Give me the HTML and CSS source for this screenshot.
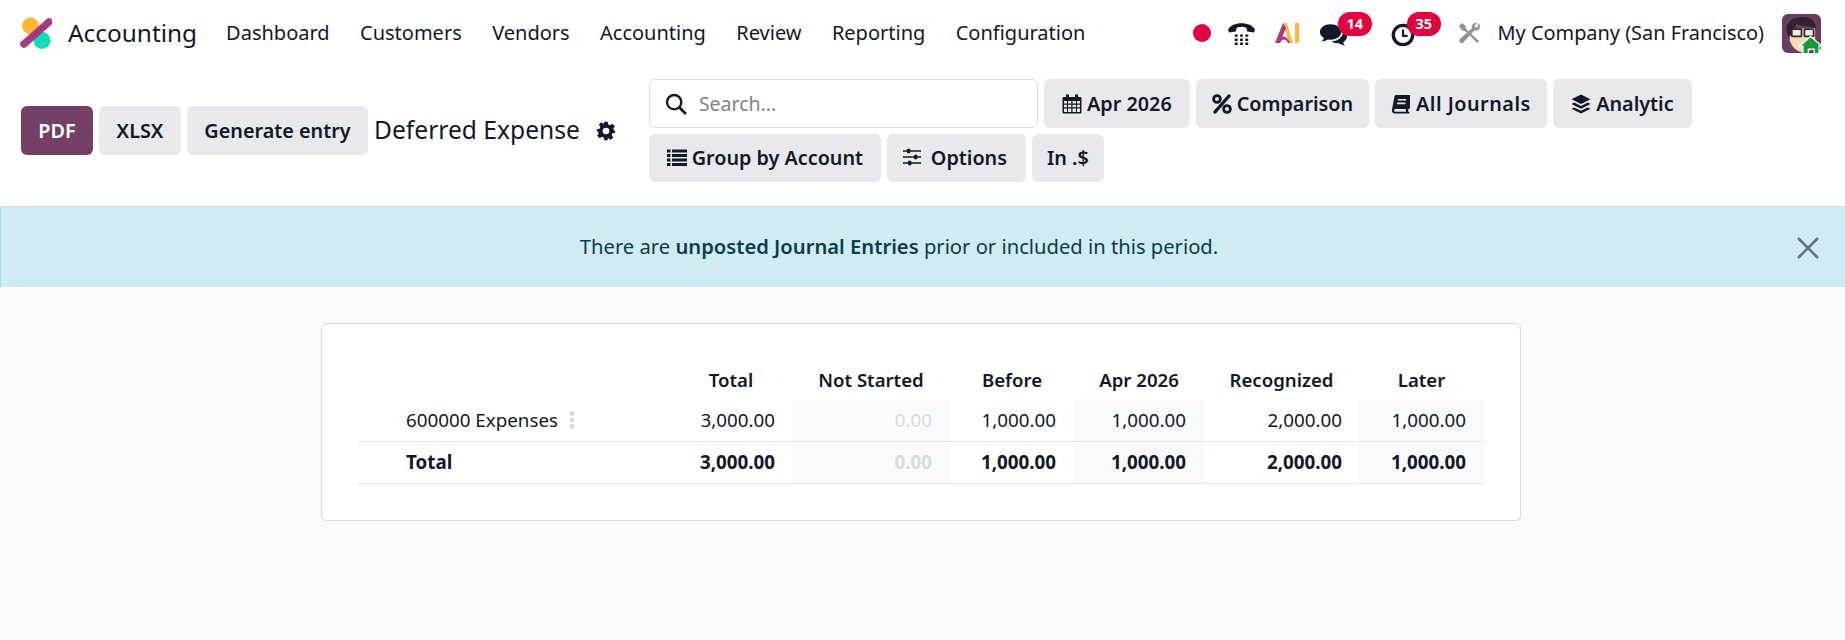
FILE: index.html
```html
<!DOCTYPE html>
<html lang="en">
<head>
    <meta charset="UTF-8">
    <title>Deferred Expense - Accounting</title>
    <link rel="stylesheet" href="styles.css">
</head>
<body>

    <header class="navbar">
        <svg class="app-logo" viewBox="0 0 32 36">
            <circle cx="10.5" cy="11" r="8.5" fill="#fbb735"/>
            <circle cx="22" cy="25.5" r="8.5" fill="#0fdcbc"/>
            <path d="M4 29 L29 7" stroke="#a93b85" stroke-width="7.5" stroke-linecap="round"/>
            <path d="M9 24.6 L25 10.5" stroke="#6e2a5f" stroke-width="1.4" stroke-dasharray="1.4 2.2"/>
        </svg>
        <span class="app-name">Accounting</span>
        <nav class="menu">
            <a>Dashboard</a>
            <a>Customers</a>
            <a>Vendors</a>
            <a>Accounting</a>
            <a>Review</a>
            <a>Reporting</a>
            <a>Configuration</a>
        </nav>
        <div class="systray">
            <span class="rec-dot"></span>
            <svg class="tray-phone" viewBox="0 0 30 26">
                <path d="M1 9 C5 0 25 0 29 9 L28 12 L21 11 L20 7 C17 5.5 13 5.5 10 7 L9 11 L2 12 Z" fill="#111827"/>
                <path d="M8 14 h3v2.5h-3z M13.5 14 h3v2.5h-3z M19 14 h3v2.5h-3z M8 18.2 h3v2.5h-3z M13.5 18.2 h3v2.5h-3z M19 18.2 h3v2.5h-3z M8 22.4 h3v2.5h-3z M13.5 22.4 h3v2.5h-3z M19 22.4 h3v2.5h-3z" fill="#111827"/>
            </svg>
            <svg class="tray-ai" viewBox="0 0 26 22">
                <path d="M9 1 L13 1 L19 21 L15 21 Z" fill="#fbbc3c"/>
                <path d="M9 1 L12 6 L6 21 L1 21 Z" fill="#a93b85"/>
                <path d="M2 21 C4 14 12 11 16 21 L14 21 C11 16 8 17 6 21 Z" fill="#a93b85"/>
                <rect x="21" y="1" width="4" height="20" fill="#fbbc3c"/>
            </svg>
            <span class="tray-badged tray-chat">
                <svg class="tray-chat-icon" viewBox="0 0 30 26">
                    <path d="M12 2 C5.5 2 1 5.6 1 10 C1 12.6 2.6 14.8 5 16.2 C4.6 17.6 3.8 18.8 2.8 19.8 C5.4 19.4 7.6 18.6 9.2 17.6 C10.1 17.8 11 17.9 12 17.9 C18.5 17.9 23 14.4 23 10 C23 5.6 18.5 2 12 2 Z" fill="#111827"/>
                    <path d="M25 9 C25 14.5 20 19 13 19.6 C15 21 17.5 21.6 20 21.4 C21.6 22.6 24 23.6 27 24 C26 23 25.4 21.8 25 20.4 C27.6 19 29 16.8 29 14.4 C29 12.4 27.4 10.4 25 9 Z" fill="#111827"/>
                </svg>
                <span class="badge">14</span>
            </span>
            <span class="tray-badged tray-clock">
                <svg class="tray-clock-icon" viewBox="0 0 26 26">
                    <circle cx="13" cy="13" r="10.5" fill="none" stroke="#111827" stroke-width="3.6"/>
                    <path d="M13 7 V14 H18" fill="none" stroke="#111827" stroke-width="2.4"/>
                </svg>
                <span class="badge">35</span>
            </span>
            <svg class="tray-tools" viewBox="0 0 24 24">
                <path d="M3 1 L7 4 L8 8 L22 21 L20 23 L7 10 L3 9 L0 4 Z" fill="#8f9299"/>
                <path d="M21 1 C23 3 23.5 6 22 8 C20.5 9.5 18.5 9.5 17 9 L5 22 C4 23.2 2 23 1 22 C0 21 0 19.5 1.2 18.4 L14 7 C13.6 5 14 3 15.5 1.8 C17 0.8 18.5 0.6 19.5 1 L17 4 L18 6 L20 6 Z" fill="#8f9299"/>
            </svg>
            <span class="company">My Company (San Francisco)</span>
            <svg class="avatar" viewBox="0 0 40 40">
                <rect width="40" height="40" rx="6" fill="#6d3a60"/>
                <path d="M8 16 L8 27 C10 35 17 40 24 40 L34 34 L34 14 Z" fill="#f6dab4"/>
                <path d="M5 19 C3 10 8 4 18 3.5 C27 2 35 6 35 15 L32 14 C26 12 20 13 15 10 C14 13 12 15 11 21 L7 23 Z" fill="#2c2430"/>
                <rect x="10" y="15.5" width="10" height="7.5" rx="1" fill="#ece9df" stroke="#2c2c30" stroke-width="1.8"/>
                <rect x="23" y="15.5" width="9.5" height="7.5" rx="1" fill="#ece9df" stroke="#2c2c30" stroke-width="1.8"/>
                <path d="M29.5 23 L41 33 L38 33 L38 41 L33 41 L33 36 L27 36 L27 41 L21.5 41 L21.5 33 L18 33 Z" fill="#0f9a3c" stroke="#fff" stroke-width="1.3"/>
            </svg>
        </div>
    </header>

    <section class="control-panel">
        <div class="action-buttons">
            <button class="btn btn-primary btn-pdf">PDF</button>
            <button class="btn btn-xlsx">XLSX</button>
            <button class="btn btn-generate">Generate entry</button>
        </div>
        <span class="report-title">Deferred Expense</span>
        <svg class="title-gear" viewBox="0 0 24 24">
            <path fill-rule="evenodd" d="M10 1 H14 L14.7 4.3 L16.9 5.2 L19.7 3.4 L22.6 6.3 L20.8 9.1 L21.7 11.3 L23 12 V14 L19.7 14.7 L18.8 16.9 L20.6 19.7 L17.7 22.6 L14.9 20.8 L14 21.2 L14 23 H10 L9.3 19.7 L7.1 18.8 L4.3 20.6 L1.4 17.7 L3.2 14.9 L2.3 12.7 L1 12 V10 L4.3 9.3 L5.2 7.1 L3.4 4.3 L6.3 1.4 L9.1 3.2 L9.6 3 Z M12 8 A4 4 0 1 0 12 16 A4 4 0 1 0 12 8 Z" fill="#111827"/>
        </svg>
        <div class="filters">
            <label class="search-box">
                <svg class="search-icon" viewBox="0 0 24 24">
                    <circle cx="10" cy="10" r="7.8" fill="none" stroke="#111827" stroke-width="2.6"/>
                    <path d="M15.5 15.5 L22 22" stroke="#111827" stroke-width="3" stroke-linecap="round"/>
                </svg>
                <span class="search-text">Search...</span>
            </label>
            <button class="btn btn-date">
                <svg class="btn-icon" viewBox="0 0 20 20">
                    <path fill-rule="evenodd" d="M4 0.5 H7 V3 H13 V0.5 H16 V3 H18 C19 3 19.5 3.6 19.5 4.5 V18 C19.5 19 19 19.5 18 19.5 H2 C1 19.5 .5 19 .5 18 V4.5 C.5 3.6 1 3 2 3 H4 Z M2 7 V9.5 H5 V7 Z M6 7 V9.5 H9.3 V7 Z M10.5 7 V9.5 H14 V7 Z M15 7 V9.5 H18 V7 Z M2 10.7 V13.3 H5 V10.7 Z M6 10.7 V13.3 H9.3 V10.7 Z M10.5 10.7 V13.3 H14 V10.7 Z M15 10.7 V13.3 H18 V10.7 Z M2 14.5 V18 H5 V14.5 Z M6 14.5 V18 H9.3 V14.5 Z M10.5 14.5 V18 H14 V14.5 Z M15 14.5 V18 H18 V14.5 Z" fill="#111827"/>
                </svg>
                Apr 2026
            </button>
            <button class="btn btn-compare">
                <svg class="btn-icon" viewBox="0 0 20 20">
                    <circle cx="5" cy="5" r="3.4" fill="none" stroke="#111827" stroke-width="2.8"/>
                    <circle cx="15" cy="15" r="3.4" fill="none" stroke="#111827" stroke-width="2.8"/>
                    <path d="M17 2 L3 18" stroke="#111827" stroke-width="3.4" stroke-linecap="round"/>
                </svg>
                Comparison
            </button>
            <button class="btn btn-journals">
                <svg class="btn-icon" viewBox="0 0 20 20">
                    <path fill-rule="evenodd" d="M5 1 H19 L19 14 L17.6 15 C17 16 17 17 17.6 18 L18.6 18.6 V19.5 H4 C1.8 19.5 .5 17.6 1 15.4 L3.4 3 C3.6 1.8 4 1 5 1 Z M7 5 L6.7 6.6 H15 L15.3 5 Z M6.2 8.6 L5.9 10.2 H14.3 L14.6 8.6 Z M4.4 15 C3.4 15 3 16 3.2 16.8 C3.4 17.4 3.8 17.7 4.4 17.7 H15 C14.6 16.8 14.6 15.9 15 15 Z" fill="#111827"/>
                </svg>
                <span class="wide-label">All Journals</span>
            </button>
            <button class="btn btn-analytic">
                <svg class="btn-icon" viewBox="0 0 20 20">
                    <path d="M10 .5 L19.5 5.2 L10 10 L.5 5.2 Z" fill="#111827"/>
                    <path d="M3.2 8.6 L.5 10 L10 14.8 L19.5 10 L16.8 8.6 L10 12 Z" fill="#111827"/>
                    <path d="M3.2 13.4 L.5 14.8 L10 19.5 L19.5 14.8 L16.8 13.4 L10 16.8 Z" fill="#111827"/>
                </svg>
                Analytic
            </button>
            <button class="btn btn-group">
                <svg class="btn-icon" viewBox="0 0 20 20">
                    <path d="M0 3 h3.5 v3 h-3.5z M5 3 h15 v3 h-15z M0 7.5 h3.5 v3 h-3.5z M5 7.5 h15 v3 h-15z M0 12 h3.5 v3 h-3.5z M5 12 h15 v3 h-15z M0 16.5 h3.5 v3 h-3.5z M5 16.5 h15 v3 h-15z" fill="#111827" transform="translate(0 -1.5)"/>
                </svg>
                Group by Account
            </button>
            <button class="btn btn-options">
                <svg class="btn-icon btn-icon-wide" viewBox="0 0 20 20">
                    <path d="M1 4 H19 M1 10 H19 M1 16 H19" stroke="#111827" stroke-width="1.6"/>
                    <rect x="5" y="1.8" width="3.4" height="4.4" rx="1" fill="#111827"/>
                    <rect x="12" y="7.8" width="3.4" height="4.4" rx="1" fill="#111827"/>
                    <rect x="6" y="13.8" width="3.4" height="4.4" rx="1" fill="#111827"/>
                </svg>
                Options
            </button>
            <button class="btn btn-currency">In .$</button>
        </div>
    </section>

    <div class="alert">
        <span class="alert-text">There are <b>unposted Journal Entries</b> prior or included in this period.</span>
        <svg class="alert-close" viewBox="0 0 24 24">
            <path d="M2 2 L22 22 M22 2 L2 22" stroke="#66757d" stroke-width="2.6"/>
        </svg>
    </div>

    <main class="content">
        <div class="report-card">
            <table class="report-table">
                <colgroup>
                    <col class="col-name">
                    <col class="col-total">
                    <col class="col-started">
                    <col class="col-before">
                    <col class="col-current">
                    <col class="col-recognized">
                    <col class="col-later">
                </colgroup>
                <thead>
                    <tr>
                        <th></th>
                        <th>Total</th>
                        <th>Not Started</th>
                        <th>Before</th>
                        <th>Apr 2026</th>
                        <th>Recognized</th>
                        <th>Later</th>
                    </tr>
                </thead>
                <tbody>
                    <tr class="account-row">
                        <td class="row-name">600000 Expenses<svg class="row-menu" viewBox="0 0 4 14"><circle cx="2" cy="2" r="1.9"/><circle cx="2" cy="7" r="1.9"/><circle cx="2" cy="12" r="1.9"/></svg></td>
                        <td class="tight">3,000.00</td>
                        <td class="shaded muted">0.00</td>
                        <td>1,000.00</td>
                        <td class="shaded">1,000.00</td>
                        <td class="tight">2,000.00</td>
                        <td class="shaded">1,000.00</td>
                    </tr>
                    <tr class="total-row">
                        <td class="row-name">Total</td>
                        <td class="tight">3,000.00</td>
                        <td class="shaded muted">0.00</td>
                        <td>1,000.00</td>
                        <td class="shaded">1,000.00</td>
                        <td class="tight">2,000.00</td>
                        <td class="shaded">1,000.00</td>
                    </tr>
                </tbody>
            </table>
        </div>
    </main>

</body>
</html>
```

FILE: styles.css
```css
* {
    box-sizing: border-box;
}
html, body {
    height: 100%;
}
body {
    margin: 0;
    display: flex;
    flex-direction: column;
    background-color: #fff;
    color: #111827;
    font-family: "Noto Sans", "Open Sans", sans-serif;
    font-size: 18px;
    overflow: hidden;
}

/* top bar */
.navbar {
    display: flex;
    align-items: center;
    height: 66px;
    padding-left: 20px;
}
.app-logo {
    width: 32px;
    height: 36px;
    margin-right: 16px;
}
.app-name {
    font-size: 24.4px;
    margin: 0 29px 2px 0;
}
.menu {
    display: flex;
    gap: 30.4px;
    margin-bottom: 2px;
    font-size: 20px;
}
.systray {
    display: flex;
    align-items: center;
    margin-left: auto;
    padding-right: 24px;
}
.rec-dot {
    width: 18px;
    height: 18px;
    border-radius: 50%;
    background-color: #e4003f;
    margin-right: 16px;
}
.tray-phone {
    width: 29px;
    height: 25px;
    margin-right: 18px;
}
.tray-ai {
    width: 26px;
    height: 22px;
    margin-right: 19px;
}
.tray-badged {
    position: relative;
    display: flex;
}
.tray-chat {
    width: 29px;
    margin-right: 43px;
}
.tray-chat-icon {
    width: 29px;
    height: 26px;
    margin-top: 3px;
}
.tray-clock {
    width: 24px;
    margin-right: 44px;
}
.tray-clock-icon {
    width: 24px;
    height: 24px;
    margin-top: 4px;
}
.badge {
    position: absolute;
    top: -7px;
    left: 19px;
    padding: 0 9px;
    height: 24px;
    line-height: 23px;
    border-radius: 12px;
    background-color: #e4003f;
    color: #fff;
    font-size: 14.5px;
    font-weight: 700;
}
.tray-clock .badge {
    left: 16px;
}
.tray-tools {
    width: 22px;
    height: 22px;
    margin-right: 17px;
}
.company {
    font-size: 19.9px;
    margin: 0 18px 2px 0;
}
.avatar {
    width: 39px;
    height: 39px;
}

/* control panel */
.control-panel {
    display: flex;
    align-items: center;
    padding: 13px 0 24px 21px;
    border-bottom: 1px solid #d8dadd;
}
.action-buttons {
    display: flex;
    gap: 6px;
}
.btn {
    display: inline-flex;
    align-items: center;
    justify-content: center;
    gap: 5px;
    height: 49px;
    border: 0;
    border-radius: 6px;
    background-color: #e7e9ed;
    color: #111827;
    font-family: inherit;
    font-size: 19.8px;
    font-weight: 600;
}
.btn-primary {
    background-color: #754065;
    color: #fff;
}
.btn-pdf { width: 72px; }
.btn-xlsx { width: 82px; }
.btn-generate { width: 181px; }
.report-title {
    font-size: 24.6px;
    margin: 0 0 3px 6px;
}
.title-gear {
    width: 20px;
    height: 20px;
    margin: 0 33px 0 16px;
}
.filters {
    display: flex;
    flex-wrap: wrap;
    gap: 6px;
    width: 1060px;
}
.search-box {
    display: flex;
    align-items: center;
    width: 389px;
    height: 49px;
    padding-left: 15px;
    border: 1px solid #d8dadd;
    border-radius: 6px;
    background-color: #fff;
    font-size: 19.5px;
}
.search-icon {
    width: 22px;
    height: 22px;
    margin-right: 12px;
}
.search-text {
    color: #7c8289;
}
.btn-icon {
    width: 20px;
    height: 20px;
}
.btn-icon-wide {
    margin-right: 4px;
}
.wide-label {
    letter-spacing: 0.5px;
}
.btn-date { width: 146px; }
.btn-compare { width: 173px; }
.btn-journals { width: 172px; }
.btn-analytic { width: 139px; }
.btn-group { width: 232px; height: 48px; padding-bottom: 2px; }
.btn-options { width: 139px; height: 48px; padding: 0 4px 2px 0; }
.btn-currency { width: 72px; height: 48px; padding-bottom: 2px; }

/* alert */
.alert {
    position: relative;
    display: flex;
    align-items: center;
    justify-content: center;
    height: 80px;
    padding: 0 48px 2px 0;
    background-color: #cfecf2;
    border-left: 1px solid #a5dcea;
    color: #0c3b4d;
    font-size: 20.2px;
}
.alert b {
    font-weight: 600;
}
.alert-close {
    position: absolute;
    top: 29px;
    right: 25px;
    width: 24px;
    height: 24px;
}

/* report */
.content {
    flex: 1;
    padding: 36px 3px 0 0;
    background-color: #f9fafb;
}
.report-card {
    width: 1200px;
    margin: 0 auto;
    padding: 38px 35px 36px 36px;
    border: 1px solid #d8dadd;
    border-radius: 6px;
    background-color: #fff;
}
.report-table {
    width: 1126px;
    table-layout: fixed;
    border-collapse: collapse;
    font-size: 18.8px;
}
.col-name { width: 312px; }
.col-total { width: 122px; }
.col-started { width: 158px; }
.col-before { width: 124px; }
.col-current { width: 130px; }
.col-recognized { width: 155px; }
.col-later { width: 125px; }
.report-table th {
    height: 38px;
    padding: 0 0 3px;
    font-size: 18.6px;
    font-weight: 600;
    text-align: center;
}
.report-table td {
    height: 42px;
    padding: 0 18px 1px 0;
    text-align: right;
    border-bottom: 1px solid #e3e5e8;
}
.report-table .account-row td {
    height: 41px;
}
.report-table td.tight {
    padding-right: 17px;
}
.report-table td.row-name {
    padding-left: 48px;
    text-align: left;
}
.shaded {
    background-color: #f9fafb;
}
.muted {
    color: #d8dadd;
}
.total-row td {
    font-weight: 700;
}
.row-menu {
    width: 6px;
    height: 18px;
    margin-left: 11px;
    vertical-align: -2px;
    fill: #d8dadd;
}
```
